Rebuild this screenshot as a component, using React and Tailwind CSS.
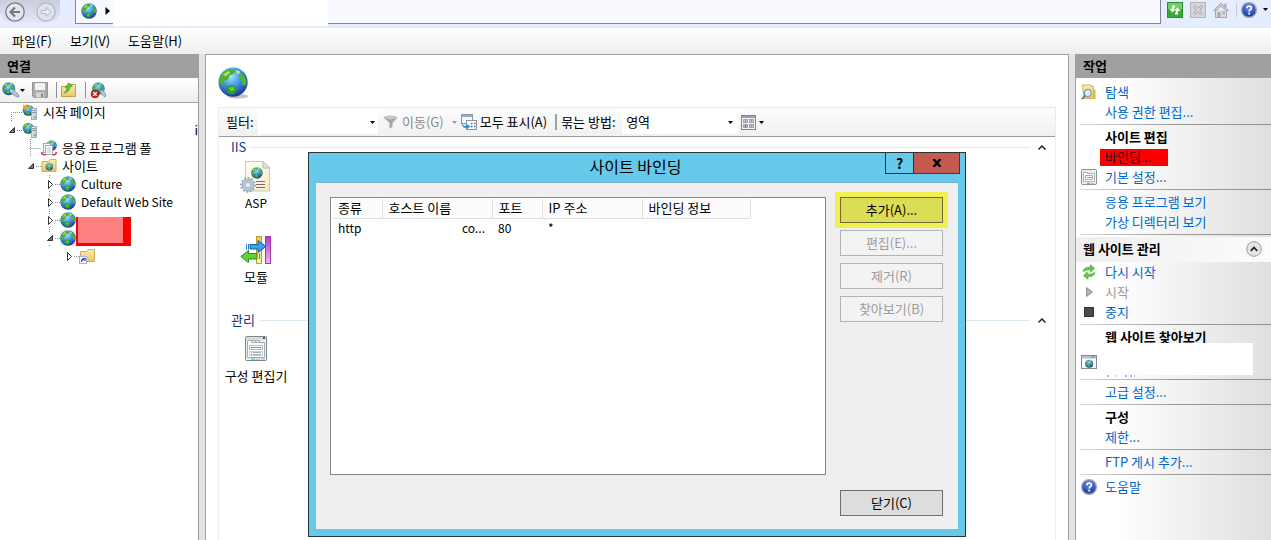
import React from "react";

const Defs = () => (
  <svg width="0" height="0" className="absolute" aria-hidden="true">
    <defs>
      <radialGradient id="sea" cx="0.42" cy="0.3" r="0.75">
        <stop offset="0" stopColor="#a4e6fb" />
        <stop offset="0.4" stopColor="#4aa3e4" />
        <stop offset="0.8" stopColor="#2450bb" />
        <stop offset="1" stopColor="#172b80" />
      </radialGradient>
      <linearGradient id="folder" x1="0" y1="0" x2="0" y2="1">
        <stop offset="0" stopColor="#fbeeb4" />
        <stop offset="1" stopColor="#e9c565" />
      </linearGradient>
      <linearGradient id="page" x1="0" y1="0" x2="1" y2="1">
        <stop offset="0" stopColor="#fffdf4" />
        <stop offset="1" stopColor="#f7ecc0" />
      </linearGradient>
      <linearGradient id="yellowBar" x1="0" y1="0" x2="0" y2="1">
        <stop offset="0" stopColor="#f3c93a" />
        <stop offset="1" stopColor="#fdf4b0" />
      </linearGradient>
      <linearGradient id="purpleBar" x1="0" y1="0" x2="0" y2="1">
        <stop offset="0" stopColor="#b53cc0" />
        <stop offset="1" stopColor="#f3b4f0" />
      </linearGradient>
      <linearGradient id="steel" x1="0" y1="0" x2="1" y2="1">
        <stop offset="0" stopColor="#eef0f4" />
        <stop offset="1" stopColor="#b9bec8" />
      </linearGradient>
      <radialGradient id="helpBlue" cx="0.5" cy="0.3" r="0.7">
        <stop offset="0" stopColor="#6d90e8" />
        <stop offset="1" stopColor="#17349c" />
      </radialGradient>
    </defs>
  </svg>
);

const GlobeShape = () => (
  <g>
    <circle cx="16" cy="16" r="15.500" fill="url(#sea)" />
    <path d="M3 9 Q7 3 13 2 L18 3 L17 7 L12 9 L11 13 L6 15 L4 20 L1.500 17 Q1 12 3 9Z" fill="#4fae2c" />
    <path d="M5 8 L11 4 L13 6 L8 10Z" fill="#a6de6a" />
    <path d="M9 21 Q13 18 17 20 L21 24 L17 29 L12 29 Q8 26 9 21Z" fill="#2f9a25" />
    <path d="M11 22 L16 21 L18 24 L14 26Z" fill="#6cc943" />
    <path d="M25 6 Q29 10 30.500 15 L29 20 L26 19 L25 14 L22 10Z" fill="#52b52f" />
    <path d="M19 3 L24 5 L21 8Z" fill="#c8ecb0" />
  </g>
);

const Globe = ({ className = "size-4" }) => (
  <svg viewBox="0 0 32 32" className={className} aria-hidden="true">
    <GlobeShape />
  </svg>
);

const BigGlobe = () => (
  <svg viewBox="0 0 34 36" className="h-[34px] w-8" aria-hidden="true">
    <ellipse cx="21" cy="31" rx="11" ry="2.500" fill="#c4c4c4" />
    <GlobeShape />
  </svg>
);

const GlobeKey = () => (
  <svg viewBox="0 0 18 16" className="h-4 w-[18px]" aria-hidden="true">
    <g transform="scale(0.42)">
      <GlobeShape />
    </g>
    <path d="M8 8 L11 7 L16 12 L17 15 L14 14.500 L9 11Z" fill="#b4c6d4" stroke="#6f8799" strokeWidth="0.7" />
    <circle cx="9.500" cy="9" r="1.600" fill="#dfeaf2" stroke="#6f8799" strokeWidth="0.7" />
  </svg>
);

const GlobeStop = () => (
  <svg viewBox="0 0 17 17" className="size-[17px]" aria-hidden="true">
    <g transform="translate(2 0) scale(0.4)">
      <GlobeShape />
    </g>
    <path d="M10 8 L13 8 L16 13 L15 15 L11 12Z" fill="#b4c6d4" stroke="#6f8799" strokeWidth="0.7" />
    <circle cx="5" cy="12" r="4" fill="#c3251c" stroke="#8d120c" strokeWidth="0.5" />
    <path d="M3.300 10.300 L6.700 13.700 M6.700 10.300 L3.300 13.700" stroke="#fff" strokeWidth="1.300" />
  </svg>
);

const Save = () => (
  <svg viewBox="0 0 16 16" className="size-4" aria-hidden="true">
    <path d="M0.500 0.500 H15.500 V15.500 H2 L0.500 14Z" fill="#adadad" stroke="#969696" />
    <rect x="3" y="1" width="10" height="7" fill="#f2f2f2" />
    <rect x="4" y="10.500" width="8" height="5" fill="#d5d5d5" />
    <rect x="9" y="11.500" width="2" height="3.500" fill="#868686" />
  </svg>
);

const FolderUp = () => (
  <svg viewBox="0 0 16 16" className="size-4" aria-hidden="true">
    <path d="M0.500 14.500 V4.500 H8 L9.500 2.500 H14.500 V14.500Z" fill="url(#folder)" stroke="#c9a347" />
    <path d="M3 11 Q6 9 6 5 L4 5.500 L8 0.800 L11.500 4.500 L9 4.800 Q8.500 10 3 11Z" fill="#59c936" stroke="#2f8f1d" strokeWidth="0.6" />
  </svg>
);

const Server = ({ star }) => (
  <svg viewBox="0 0 16 16" className="size-4" aria-hidden="true">
    <g transform="translate(0.500 0.500) scale(0.36)">
      <GlobeShape />
    </g>
    {star && <path d="M0.500 0.500 L3 1.500 L5 0 L5.500 2.500 L7.500 4 L4.500 4.500 L3 6.500 L2 4Z" fill="#f6a21a" />}
    <rect x="9.500" y="4.500" width="5" height="11" fill="url(#steel)" stroke="#9aa2ae" strokeWidth="0.8" />
    <path d="M10 6.500 H14 M10 8.500 H14" stroke="#7d8694" strokeWidth="0.8" />
    <rect x="12" y="12.500" width="1.500" height="1.500" fill="#4bc13b" />
  </svg>
);

const AppPool = () => (
  <svg viewBox="0 0 16 16" className="size-4" aria-hidden="true">
    <g transform="translate(5 0) scale(0.34)">
      <GlobeShape />
    </g>
    <rect x="2.500" y="3.500" width="7" height="9" fill="#fff" stroke="#8d97a6" strokeWidth="0.8" />
    <rect x="4.500" y="5.500" width="7" height="9" fill="#fff" stroke="#8d97a6" strokeWidth="0.8" />
    <path d="M6 8 H10 M6 10 H10 M6 12 H10" stroke="#9aa3b3" strokeWidth="0.7" />
    <path d="M0.500 12 Q1 15 4.500 15 M15.500 12 Q15 15 11.500 15" stroke="#cc3a2c" strokeWidth="1.500" fill="none" />
  </svg>
);

const FolderGlobe = () => (
  <svg viewBox="0 0 16 16" className="size-4" aria-hidden="true">
    <path d="M1 13.500 V3.500 H8 L9.500 1.500 H15 V13.500Z" fill="url(#folder)" stroke="#cfae57" />
    <g transform="translate(4.500 5) scale(0.24)">
      <GlobeShape />
    </g>
  </svg>
);

const FolderLink = () => (
  <svg viewBox="0 0 16 16" className="size-4" aria-hidden="true">
    <path d="M1.500 13.500 V3.500 H8 L9.500 1.500 H15.500 V13.500Z" fill="url(#folder)" stroke="#cfae57" />
    <rect x="0.500" y="8.500" width="7" height="7" fill="#fff" stroke="#a8b2d0" />
    <path d="M2.500 14 Q2.500 11.500 5 11.200 M3.500 10.500 H6 V13" stroke="#2b3fa0" fill="none" strokeWidth="1.200" />
  </svg>
);

const Help = () => (
  <svg viewBox="0 0 16 16" className="size-4" aria-hidden="true">
    <circle cx="8" cy="8" r="7.300" fill="url(#helpBlue)" stroke="#9aa2b4" strokeWidth="1.400" />
    <path d="M5.800 6.200 Q5.900 4 8.100 4 Q10.400 4 10.400 6 Q10.400 7.200 8.900 8 Q8.200 8.500 8.200 9.600" fill="none" stroke="#fff" strokeWidth="1.700" />
    <rect x="7.300" y="10.700" width="1.800" height="1.800" fill="#fff" />
  </svg>
);

const Caret = ({ className = "text-black" }) => (
  <svg viewBox="0 0 5 3" className={`h-[3px] w-[5px] shrink-0 ${className}`} aria-hidden="true">
    <path d="M0 0 H5 L2.500 3Z" fill="currentColor" />
  </svg>
);

const BackArrow = () => (
  <svg viewBox="0 0 20 20" className="size-5" aria-hidden="true">
    <circle cx="10" cy="10" r="9.200" fill="#e4e6ee" stroke="#7b7d84" strokeWidth="1.300" />
    <path d="M15 10 H6 M10 5.500 L5.500 10 L10 14.500" fill="none" stroke="#77797f" strokeWidth="2.200" />
  </svg>
);

const ForwardArrow = () => (
  <svg viewBox="0 0 20 20" className="size-5" aria-hidden="true">
    <circle cx="10" cy="10" r="9.200" fill="#dfe2ec" stroke="#b4b7c1" strokeWidth="1.200" />
    <path d="M5 8.500 H10 V5.500 L15 10 L10 14.500 V11.500 H5Z" fill="#eceef5" stroke="#b3b6c0" />
  </svg>
);

const RefreshGreen = () => (
  <svg viewBox="0 0 16 16" className="size-4" aria-hidden="true">
    <rect x="0.500" y="0.500" width="15" height="15" fill="#37ad35" stroke="#2a8c2c" />
    <rect x="1" y="1" width="14" height="6" fill="#72cd66" />
    <path d="M6 7.800 V4.500 H8 M10 8.200 V11.500 H8" fill="none" stroke="#fff" strokeWidth="1.800" />
    <path d="M2.500 7 H8.500 L5.500 10.500Z M7.500 9 H13.500 L10.500 5.500Z" fill="#fff" />
  </svg>
);

const StopGray = () => (
  <svg viewBox="0 0 16 16" className="size-4" aria-hidden="true">
    <rect x="0.500" y="0.500" width="15" height="15" fill="#d5d6d9" stroke="#b3b4b8" />
    <path d="M4 4 L12 12 M12 4 L4 12" stroke="#a2a3a8" strokeWidth="3" />
    <path d="M4.300 4.300 L11.700 11.700 M11.700 4.300 L4.300 11.700" stroke="#e9eaec" strokeWidth="1.200" />
  </svg>
);

const HomeGray = () => (
  <svg viewBox="0 0 16 16" className="size-4" aria-hidden="true">
    <path d="M2.500 8 V15.500 H13.500 V8" fill="#dcdde0" stroke="#a7a8ac" />
    <path d="M11 1.500 H13.500 V6 H11Z" fill="#b7b8bc" />
    <path d="M0.500 8.500 L8 1 L15.500 8.500 L13.500 9 L8 4 L2.500 9Z" fill="#c9cace" stroke="#9b9ca1" strokeWidth="0.8" />
    <rect x="4.500" y="10" width="3" height="5" fill="#a4a5a9" />
    <rect x="9" y="9.500" width="3" height="3" fill="#b5b6ba" />
  </svg>
);

const Funnel = () => (
  <svg viewBox="0 0 15 14" className="h-3.5 w-[15px]" aria-hidden="true">
    <ellipse cx="7.500" cy="2.500" rx="7" ry="2" fill="#c6c6c6" />
    <path d="M0.500 2.500 Q7.500 6 14.500 2.500 L9.500 8 V12 L6.500 13.500 V8Z" fill="#a5a5a5" />
    <path d="M9 8 L14 3.500 L9.500 8 V12 L8.500 12.500Z" fill="#c9c9c9" />
  </svg>
);

const ShowAll = () => (
  <svg viewBox="0 0 16 16" className="size-4" aria-hidden="true">
    <rect x="0.500" y="0.500" width="11" height="9" fill="#f4f6fa" stroke="#8d95a5" />
    <rect x="1" y="1" width="10" height="2" fill="#a2aaba" />
    <rect x="5.500" y="6.500" width="10" height="9" fill="#fff" stroke="#8d95a5" />
    <path d="M10 9.500 H11.500 M13 9.500 H14.500 M10 12.500 H11.500 M13 12.500 H14.500" stroke="#5163a8" strokeWidth="1.500" />
    <path d="M1 8 Q1 12 5 12 V9.500 L9.500 12.500 L5 15.800 V14 Q0.500 14 1 8Z" fill="#2f94d8" />
  </svg>
);

const ViewGrid = () => (
  <svg viewBox="0 0 15 15" className="size-[15px]" aria-hidden="true">
    <rect x="0.500" y="0.500" width="14" height="14" fill="#f5f5f7" stroke="#80858f" />
    <rect x="1" y="1" width="13" height="2" fill="#98a2b8" />
    <g fill="#fff" stroke="#9da2ac">
      <rect x="2.500" y="4.500" width="4" height="3" />
      <rect x="8.500" y="4.500" width="4" height="3" />
      <rect x="2.500" y="9.500" width="4" height="3" />
      <rect x="8.500" y="9.500" width="4" height="3" />
    </g>
    <path d="M3.500 6 H5.500" stroke="#7fb13f" strokeWidth="2" />
    <path d="M9.500 6 H11.500" stroke="#5aa6d8" strokeWidth="2" />
    <path d="M3.500 11 H5.500" stroke="#6259c8" strokeWidth="2" />
    <path d="M9.500 11 H11.500" stroke="#e0755b" strokeWidth="2" />
  </svg>
);

const ChevronUp = () => (
  <svg viewBox="0 0 8 5" className="h-[5px] w-2" aria-hidden="true">
    <path d="M0.500 4.500 L4 1 L7.500 4.500" fill="none" stroke="#222" strokeWidth="1.500" />
  </svg>
);

const AspIcon = () => (
  <svg viewBox="0 0 32 33" className="h-[33px] w-8" aria-hidden="true">
    <path d="M5.500 1.500 H23 L29.500 8 V31 H5.500Z" fill="url(#page)" stroke="#c9c6bb" />
    <path d="M23 1.500 V8 H29.500Z" fill="#e6e6e6" stroke="#b5b5b5" />
    <g transform="translate(11 7) scale(0.37)">
      <GlobeShape />
    </g>
    <path d="M16 21.500 H25 M16 24.500 H25 M16 27.500 H25" stroke="#76668c" strokeWidth="1.200" />
    <circle cx="8" cy="25" r="6.800" fill="none" stroke="#8ca5c1" strokeWidth="2" strokeDasharray="1.800 1.700" />
    <circle cx="8" cy="25" r="4.500" fill="#f4f0df" stroke="#b3c6da" strokeWidth="3" />
    <circle cx="8" cy="25" r="5.900" fill="none" stroke="#86a0bc" strokeWidth="0.6" />
    <circle cx="8" cy="25" r="2.700" fill="#f4f0df" stroke="#86a0bc" strokeWidth="0.7" />
  </svg>
);

const ModulesIcon = () => (
  <svg viewBox="0 0 32 30" className="h-[30px] w-8" aria-hidden="true">
    <rect x="16.500" y="1.500" width="5" height="27" fill="url(#yellowBar)" stroke="#bf9a2c" />
    <rect x="25.500" y="1.500" width="5" height="27" fill="url(#purpleBar)" stroke="#9a3aa5" />
    <path d="M10 9.500 H18 V5.500 L26 11.500 L18 17.500 V14 H10Z" fill="#3d9fe6" stroke="#1a62ab" />
    <path d="M6.500 9 V14.500 M8.500 9 V14.500" stroke="#2c7fc8" />
    <path d="M17 18.500 H8.500 V15.500 L0.800 21.500 L8.500 27.500 V24 H17Z" fill="#5ed139" stroke="#2b8d1b" />
    <path d="M19.500 18.500 V24" stroke="#3fae2a" />
  </svg>
);

const ConfigIcon = () => (
  <svg viewBox="0 0 24 26" className="h-[26px] w-6" aria-hidden="true">
    <rect x="1.500" y="0.500" width="21" height="24" rx="1" fill="#eef0f0" stroke="#7e8588" />
    <path d="M2 2.500 H22" stroke="#cfd6d6" strokeWidth="2" />
    <rect x="19" y="1" width="2" height="2" fill="#50585c" />
    <path d="M3.500 4.500 H7.500 V6.500 H20.500 V21.500 H3.500Z" fill="#fff" stroke="#a4acb6" />
    <path d="M7.500 4.500 H15.500 V6.500 M11.500 4.500 V6.500" fill="none" stroke="#a4acb6" />
    <rect x="5.500" y="9.500" width="13" height="4" fill="#fff" stroke="#b3bcc4" />
    <rect x="5.500" y="15.500" width="13" height="4" fill="#fff" stroke="#c8d0d6" />
    <path d="M7 11.500 H17" stroke="#8f98a2" />
    <path d="M9 16.500 H17 M9 18.500 H17" stroke="#a4acb4" />
    <path d="M7 16.500 H8 M7 18.500 H8" stroke="#28b6e0" />
    <path d="M7 23 H11" stroke="#27bfe8" />
    <path d="M12 23 H16 M17 23 H21" stroke="#b4b8ba" />
  </svg>
);

const SettingsIcon = () => (
  <svg viewBox="0 0 16 16" className="size-4" aria-hidden="true">
    <rect x="0.500" y="0.500" width="15" height="15" rx="1" fill="#eceeee" stroke="#8b9194" />
    <path d="M2.500 3.500 H6.500 V4.500 H13.500 V12.500 H2.500Z" fill="#fff" stroke="#a7afb8" />
    <rect x="4.500" y="6.500" width="7" height="4" fill="#fff" stroke="#a7afb8" />
    <path d="M6 8.500 H11" stroke="#8f98a2" />
    <path d="M6 14.500 H9" stroke="#27bfe8" />
    <path d="M10 14.500 H13" stroke="#b4b8ba" />
  </svg>
);

const Explore = () => (
  <svg viewBox="0 0 16 16" className="size-4" aria-hidden="true">
    <path d="M1.500 1 H10 V2.500 H12.500 V14.500 H3Z" fill="url(#folder)" stroke="#c9a347" strokeWidth="0.8" />
    <path d="M12.500 5 L14.500 6 V15 H12Z" fill="#e1b94d" />
    <circle cx="6.800" cy="9" r="3.500" fill="#d9ecf8" stroke="#7e95a8" strokeWidth="1.200" />
    <path d="M4.300 11.500 L0.800 15" stroke="#717d8a" strokeWidth="1.800" />
  </svg>
);

const Restart = () => (
  <svg viewBox="0 0 16 16" className="size-4" aria-hidden="true">
    <path d="M2 7.500 Q3 2.800 9.500 3.400 L9 0.800 L13.500 4 L10 8.200 L9.600 5.900 Q5 5.400 2 7.500Z" fill="#63cc45" stroke="#3a9e2b" strokeWidth="0.6" />
    <path d="M14 8.500 Q13 13.200 6.500 12.600 L7 15.200 L2.500 12 L6 7.800 L6.400 10.100 Q11 10.600 14 8.500Z" fill="#63cc45" stroke="#3a9e2b" strokeWidth="0.6" />
  </svg>
);

const Play = () => (
  <svg viewBox="0 0 16 16" className="size-4" aria-hidden="true">
    <path d="M5.500 3.500 L11.500 8 L5.500 12.500Z" fill="#b5b5b5" stroke="#8f8f8f" />
  </svg>
);

const StopDark = () => (
  <svg viewBox="0 0 16 16" className="size-4" aria-hidden="true">
    <rect x="3.500" y="3.500" width="9" height="9" fill="#4b4b4b" stroke="#353535" />
  </svg>
);

const Browse = () => (
  <svg viewBox="0 0 16 14" className="h-3.5 w-4" aria-hidden="true">
    <rect x="0.500" y="0.500" width="15" height="13" fill="#fdfdfd" stroke="#7d8a99" />
    <rect x="1" y="1" width="14" height="2.500" fill="#b2bfce" />
    <path d="M10.500 2 H14" stroke="#42526a" strokeDasharray="1 0.800" />
    <g transform="translate(4 4.500) scale(0.26)">
      <GlobeShape />
    </g>
  </svg>
);

const CollapseRound = () => (
  <svg viewBox="0 0 16 16" className="size-4" aria-hidden="true">
    <circle cx="8" cy="8" r="7.300" fill="#e4e4e4" stroke="#9b9b9b" />
    <path d="M4.800 9.800 L8 6.500 L11.200 9.800" fill="none" stroke="#222" strokeWidth="1.700" />
  </svg>
);

const Twisty = ({ state, elbow }) => (
  <svg viewBox="0 0 19 18" className="h-[18px] w-[19px] shrink-0" aria-hidden="true">
    {state !== "none" && <path d="M14 9.500 H19" stroke="#8c8c8c" strokeDasharray="1 1" />}
    {state === "open" && <path d="M6.500 11.500 H11.500 V6.500Z" fill="#777" stroke="#333" />}
    {state === "closed" && <path d="M7.500 5.500 L11.500 9.500 L7.500 13.500Z" fill="#fff" stroke="#333" />}
    {elbow === "down" && <path d="M8.500 18 V9.500 H19" fill="none" stroke="#8c8c8c" strokeDasharray="1 1" />}
    {elbow === "through" && <path d="M8.500 0 V18 M8.500 9.500 H19" fill="none" stroke="#8c8c8c" strokeDasharray="1 1" />}
    {elbow === "stub" && <path d="M8.500 0 V3 M8.500 16 V18" fill="none" stroke="#8c8c8c" strokeDasharray="1 1" />}
  </svg>
);

const indents = ["pl-[3px]", "pl-[22px]", "pl-[41px]", "pl-[60px]"];

const TreeRow = ({ depth, state = "none", elbow, icon, selected, latin, children }) => (
  <li className={`flex h-[18px] items-center ${indents[depth]}`}>
    <Twisty state={state} elbow={elbow} />
    <span className={selected ? "bg-[#ececec]" : ""}>{icon}</span>
    {children && (
      <span className={`ml-[5px] leading-4 whitespace-nowrap ${latin ? "text-[12px]" : ""}`}>{children}</span>
    )}
  </li>
);

const Divider = () => (
  <div className="flex h-[5px] items-center pl-1">
    <div className="h-px flex-1 bg-linear-to-r from-[#d8d8d8] via-[#9a9a9a] to-[#8e8e8e]" />
  </div>
);

const Action = ({ icon, heading, disabled, marked, children }) => (
  <div className="flex h-5 items-center">
    <span className="flex w-[29px] shrink-0 justify-center pr-[3px]">{icon}</span>
    {heading ? (
      <h3 className="font-bold text-black">{children}</h3>
    ) : disabled ? (
      <span className="text-[#9a9a9a]">{children}</span>
    ) : marked ? (
      <a href="#binding" className="-ml-[5px] h-[17px] w-[68px] bg-[#fa0000] pl-[5px] leading-[16px] text-[#3a0808]">
        {children}
      </a>
    ) : (
      <a href="#action" className="text-[#0066cc]">{children}</a>
    )}
  </div>
);

const Group = ({ title, children }) => (
  <section>
    <div className="flex h-5 items-center pr-[9px] pl-3">
      <h2 className="leading-4 text-[#0a3796]">{title}</h2>
      <div className="mr-2 ml-1 h-px flex-1 bg-[#dde8f5]" />
      <button aria-label={`${title} 접기`}>
        <ChevronUp />
      </button>
    </div>
    {children}
  </section>
);

const Feature = ({ icon, label, latin }) => (
  <button className="flex w-[74px] flex-col items-center">
    <span className="flex h-[34px] items-center">{icon}</span>
    <span className={`h-5 leading-5 whitespace-nowrap ${latin ? "text-[12px]" : ""}`}>{label}</span>
  </button>
);

const DialogButton = ({ disabled, highlighted, children }) => (
  <button
    disabled={disabled}
    className={`h-[26px] w-full border ${
      disabled
        ? "border-[#b0b4b8] bg-[#f3f3f3] text-[#9b9b9b]"
        : highlighted
          ? "border-[#6d6b35] bg-[#dcdc55] ring-[5px] ring-[#f1f04f]"
          : "border-[#707070] bg-[#dddddd]"
    }`}
  >
    {children}
  </button>
);

const BindingDialog = () => (
  <div
    role="dialog"
    aria-label="사이트 바인딩"
    className="absolute top-[152px] left-[308px] flex h-[385px] w-[658px] flex-col border border-[#2c3236] bg-[#66c9ea] px-[7px] pb-[7px]"
  >
    <div className="flex h-[29px] shrink-0">
      <div className="w-[70px]" />
      <h1 className="flex-1 text-center text-[16px] leading-[27px]">사이트 바인딩</h1>
      <div className="-mr-[2px] flex h-[21px] font-bold">
        <button aria-label="도움말" className="w-[29px] border border-t-0 border-[#25313a] text-[14px] leading-5">?</button>
        <button aria-label="닫기" className="flex w-[46px] items-center justify-center border border-t-0 border-l-0 border-[#5d2b2b] bg-[#c35a50]">
          <svg viewBox="0 0 10 8" className="h-2 w-2.5" aria-hidden="true">
            <path d="M1.500 0 L8.500 8 M8.500 0 L1.500 8" stroke="#000" strokeWidth="2.400" />
          </svg>
        </button>
      </div>
    </div>
    <div className="flex min-h-0 flex-1 gap-3.5 border-t border-[#7fb0c6] bg-[#efefef] pt-3.5 pr-[15px] pb-[13px] pl-3.5">
      <div className="mb-[41px] flex-1 border border-[#828790] bg-white p-px">
        <table className="w-[418px] table-fixed border-collapse text-left">
          <colgroup>
            <col className="w-[50px]" />
            <col className="w-[110px]" />
            <col className="w-[50px]" />
            <col className="w-[100px]" />
            <col className="w-[108px]" />
          </colgroup>
          <thead>
            <tr className="h-[19px]">
              {["종류", "호스트 이름", "포트", "IP 주소", "바인딩 정보"].map((t) => (
                <th key={t} className="border-r border-b border-[#dedfe1] bg-[#fcfcfc] p-0 pl-1.5 leading-[18px] font-normal whitespace-nowrap">
                  {t}
                </th>
              ))}
            </tr>
          </thead>
          <tbody>
            <tr className="h-[17px] text-[12px] leading-[17px]">
              <td className="p-0 pl-1.5">http</td>
              <td className="p-0 pr-[7px] text-right">co...</td>
              <td className="p-0 pl-1.5">80</td>
              <td className="p-0 pl-1.5">*</td>
              <td className="p-0" />
            </tr>
          </tbody>
        </table>
      </div>
      <div className="flex w-[103px] flex-col">
        <div className="flex flex-col gap-[7px]">
          <DialogButton highlighted>추가(A)...</DialogButton>
          <DialogButton disabled>편집(E)...</DialogButton>
          <DialogButton disabled>제거(R)</DialogButton>
          <DialogButton disabled>찾아보기(B)</DialogButton>
        </div>
        <div className="mt-auto">
          <DialogButton>닫기(C)</DialogButton>
        </div>
      </div>
    </div>
  </div>
);

export default function App() {
  return (
    <div className="relative flex h-screen flex-col overflow-hidden bg-[#e3e3e3] font-['Noto_Sans_CJK_KR',sans-serif] text-[13px] leading-[18px] text-black">
      <Defs />

      <header className="flex h-7 shrink-0 bg-[#e6edfe]">
        <div className="flex w-[75px] shrink-0 items-start">
          <div className="flex h-[23px] items-center gap-[11px] rounded-b-xl bg-linear-to-b from-[#c9cedd] to-[#e2e8f8] pr-1 pl-[5px]">
            <button aria-label="뒤로"><BackArrow /></button>
            <button aria-label="앞으로"><ForwardArrow /></button>
          </div>
        </div>
        <div className="flex h-6 flex-1 items-start border border-t-0 border-[#84878f] bg-[#f8faff]">
          <span className="flex h-[22px] w-[37px] shrink-0 items-center gap-2 pl-[5px]">
            <Globe />
            <svg viewBox="0 0 5 8" className="h-2 w-[5px]" aria-hidden="true">
              <path d="M0.500 0 L5 4 L0.500 8Z" fill="#000" />
            </svg>
          </span>
          <input aria-label="주소" className="h-[26px] w-[215px] bg-white outline-none" />
        </div>
        <div className="flex h-[19px] w-[110px] shrink-0 items-center gap-[7px] pl-1.5">
          <button aria-label="새로 고침"><RefreshGreen /></button>
          <button aria-label="중지"><StopGray /></button>
          <button aria-label="홈"><HomeGray /></button>
          <span className="h-3.5 w-px shrink-0 bg-[#c3c8d6]" />
          <button aria-label="도움말" className="-ml-[3px] flex items-center gap-1.5"><Help /><Caret /></button>
        </div>
      </header>

      <nav className="flex h-[26px] shrink-0 items-center gap-[18px] bg-linear-to-b from-white to-[#eeeeee] pl-3 leading-4">
        <button>파일(F)</button>
        <button>보기(V)</button>
        <button>도움말(H)</button>
      </nav>

      <div className="flex min-h-0 flex-1">
        <aside className="flex w-[199px] shrink-0 flex-col border-r border-[#9f9f9f] bg-white">
          <h2 className="h-6 bg-[#a0a0a0] pl-[7px] leading-[23px] font-bold">연결</h2>
          <div className="flex h-[25px] shrink-0 items-center border-b border-[#a5a5a5] bg-linear-to-b from-white to-[#ededed] pl-0.5">
            <button aria-label="연결" className="flex items-center"><GlobeKey /><Caret /></button>
            <button aria-label="저장" className="ml-[7px]"><Save /></button>
            <span className="mr-1 ml-2 h-4 w-px bg-[#8f8f8f]" />
            <button aria-label="위로"><FolderUp /></button>
            <span className="mr-1 ml-2 h-4 w-px bg-[#8f8f8f]" />
            <button aria-label="연결 끊기"><GlobeStop /></button>
          </div>
          <ul className="relative">
            <TreeRow depth={0} elbow="down" icon={<Server star />}>시작 페이지</TreeRow>
            <li className="flex h-[18px] items-center pl-[3px]">
              <Twisty state="open" />
              <Server />
              <span className="ml-auto">i</span>
            </li>
            <TreeRow depth={1} elbow="through" icon={<AppPool />}>응용 프로그램 풀</TreeRow>
            <TreeRow depth={1} state="open" icon={<FolderGlobe />}>사이트</TreeRow>
            <TreeRow depth={2} state="closed" elbow="stub" icon={<Globe />} latin>Culture</TreeRow>
            <TreeRow depth={2} state="closed" elbow="stub" icon={<Globe />} latin>Default Web Site</TreeRow>
            <TreeRow depth={2} state="closed" elbow="stub" icon={<Globe />} />
            <TreeRow depth={2} state="open" elbow="stub" icon={<Globe />} selected />
            <TreeRow depth={3} state="closed" icon={<FolderLink />} />
            <li aria-hidden="true" className="absolute top-[114px] left-[76px] h-[29px] w-[55px] bg-[#ff0000] pr-2 pb-[3px] pl-0.5">
              <div className="h-full bg-[#ff8080]" />
            </li>
          </ul>
        </aside>

        <main className="mx-1.5 flex min-w-0 flex-1 flex-col border border-b-0 border-[#9f9f9f] bg-white px-3 pt-3">
          <div className="mb-1.5"><BigGlobe /></div>
          <div className="flex min-h-0 flex-1 flex-col border-x border-t border-[#ececec]">
            <div className="flex h-[29px] shrink-0 items-center border-b border-[#9c9c9c] bg-linear-to-b from-[#fdfdfd] to-[#f0f0f0] pl-[7px] leading-4 whitespace-nowrap">
              <label htmlFor="filter" className="w-8">필터:</label>
              <div className="flex h-[23px] w-[120px] items-center bg-white pr-[3px]">
                <input id="filter" className="min-w-0 flex-1 outline-none" />
                <Caret />
              </div>
              <button className="ml-[5px] flex items-center gap-1 text-[#8a8a8a]" disabled>
                <Funnel />이동(G)<Caret className="ml-1 text-[#9a9a9a]" />
              </button>
              <button className="ml-1 flex items-center gap-[3px]"><ShowAll />모두 표시(A)</button>
              <span className="mr-1 ml-2 h-4 w-0.5 bg-[#a0a0a0]" />
              <label htmlFor="group-by" className="w-[61px]">묶는 방법:</label>
              <div className="flex h-[23px] w-[115px] items-center bg-white pr-1 pl-1">
                <select id="group-by" className="min-w-0 flex-1 appearance-none bg-transparent outline-none">
                  <option>영역</option>
                </select>
                <Caret />
              </div>
              <button aria-label="보기" className="ml-1 flex items-center gap-[3px]"><ViewGrid /><Caret /></button>
            </div>
            <Group title="IIS">
              <div className="flex flex-col gap-5 pt-0.5">
                <Feature icon={<AspIcon />} label="ASP" latin />
                <Feature icon={<ModulesIcon />} label="모듈" />
              </div>
            </Group>
            <div className="h-[23px] shrink-0" />
            <Group title="관리">
              <div className="pt-0.5">
                <Feature icon={<ConfigIcon />} label="구성 편집기" />
              </div>
            </Group>
          </div>
        </main>

        <aside className="flex w-[196px] shrink-0 flex-col border-l border-[#9f9f9f] bg-linear-to-r from-white from-20% to-[#dfdfdf]">
          <h2 className="h-6 shrink-0 bg-[#a0a0a0] pl-[7px] leading-[23px] font-bold">작업</h2>
          <div className="pt-1">
            <Action icon={<Explore />}>탐색</Action>
            <Action>사용 권한 편집...</Action>
            <Divider />
            <Action heading>사이트 편집</Action>
            <Action marked>바인딩...</Action>
            <Action icon={<SettingsIcon />}>기본 설정...</Action>
            <Divider />
            <Action>응용 프로그램 보기</Action>
            <Action>가상 디렉터리 보기</Action>
            <Divider />
          </div>
          <div className="flex h-[25px] shrink-0 items-center justify-between bg-linear-to-r from-[#efefef] to-[#fbfbfb] pr-[9px] pb-0.5 pl-[7px]">
            <h2 className="font-bold">웹 사이트 관리</h2>
            <button aria-label="접기"><CollapseRound /></button>
          </div>
          <div>
            <Action icon={<Restart />}>다시 시작</Action>
            <Action icon={<Play />} disabled>시작</Action>
            <Action icon={<StopDark />}>중지</Action>
            <Divider />
            <Action heading>웹 사이트 찾아보기</Action>
            <div className="flex h-[30px] items-center">
              <span className="flex w-[29px] shrink-0 justify-center pr-[3px]"><Browse /></span>
              <div className="relative -ml-px h-full w-[149px]">
                <div className="absolute -top-1 left-0 h-8 w-full bg-white" />
                <svg viewBox="0 0 30 2" className="absolute bottom-0 left-[3px] h-0.5 w-[30px]" aria-hidden="true">
                  <path d="M0 1 H2 M8 1 H9 M18 1 H20 M23 1 H25 M27 1 H28" stroke="#3b86d4" />
                </svg>
              </div>
            </div>
            <Divider />
            <Action>고급 설정...</Action>
            <Divider />
            <Action heading>구성</Action>
            <Action>제한...</Action>
            <Divider />
            <Action>FTP 게시 추가...</Action>
            <Divider />
            <Action icon={<Help />}>도움말</Action>
          </div>
        </aside>
      </div>

      <BindingDialog />
    </div>
  );
}
